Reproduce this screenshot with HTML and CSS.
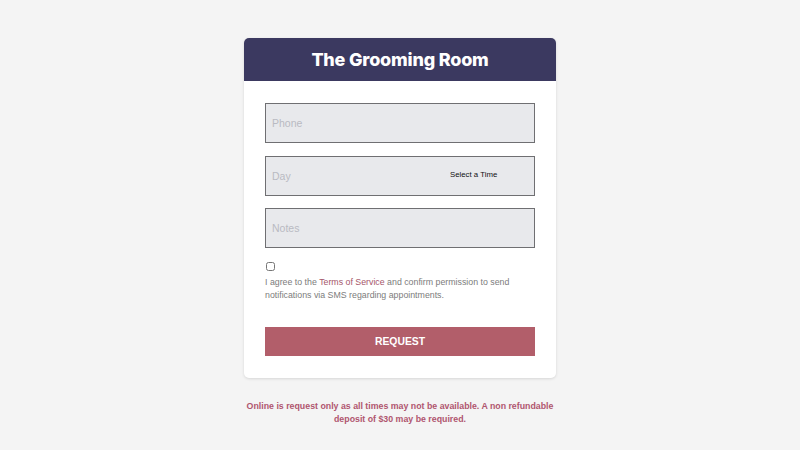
FILE: index.html
```html
<!DOCTYPE html>
<html lang="en">
<head>
    <meta charset="UTF-8">
    <meta name="viewport" content="width=device-width, initial-scale=1.0">
    <title>The Grooming Room</title>
    <link rel="stylesheet" href="styles.css">
</head>
<body>
    <div class="card">
        <div class="card-header">
            <h1>The Grooming Room</h1>
        </div>
        <form class="card-body">
            <div class="field">
                <input type="text" placeholder="Phone">
            </div>
            <div class="field">
                <input type="text" placeholder="Day">
                <span class="time-select">Select a Time</span>
            </div>
            <div class="field">
                <input type="text" placeholder="Notes">
            </div>
            <div class="consent">
                <input type="checkbox" id="agree">
                <label for="agree">I agree to the <a href="#">Terms of Service</a> and confirm permission to send notifications via SMS regarding appointments.</label>
            </div>
            <button type="button" class="request-btn">REQUEST</button>
        </form>
    </div>

    <p class="notice">Online is request only as all times may not be available. A non refundable deposit of $30 may be required.</p>
</body>
</html>
```

FILE: styles.css
```css
body {
    margin: 0;
    background: #f4f4f4;
    font-family: "Liberation Sans", Arial, sans-serif;
    color: #333;
}
.card {
    width: 312px;
    margin: 38px auto 0;
    background: #fff;
    border-radius: 5px;
    box-shadow: 0 1px 3px rgba(0, 0, 0, 0.12);
    overflow: hidden;
}
.card-header {
    background: #3b3960;
    height: 43px;
    display: flex;
    align-items: center;
    justify-content: center;
}
.card-header h1 {
    margin: 0;
    color: #fff;
    font-family: Inter, "Liberation Sans", sans-serif;
    font-weight: 800;
    font-size: 18px;
    letter-spacing: -0.2px;
}
.card-body {
    padding: 22px 21px 22px;
    display: flex;
    flex-direction: column;
}
.field {
    display: flex;
    align-items: center;
    height: 40px;
    box-sizing: border-box;
    border: 1px solid #6f6f72;
    background: #e8e9ec;
    margin-bottom: 12.5px;
}
.field input {
    flex: 1;
    border: none;
    background: transparent;
    padding: 0 6px;
    font-family: inherit;
    font-size: 10.5px;
    outline: none;
    min-width: 0;
}
.field input::placeholder {
    color: #b9bac2;
}
.time-select {
    width: 84px;
    font-size: 7.8px;
    color: #111;
    padding-bottom: 3px;
}
.consent {
    font-size: 8.8px;
    line-height: 13px;
    color: #7c7c7c;
}
.consent input {
    display: block;
    margin: 1.5px 0 4.5px 1px;
    width: 9px;
    height: 9px;
}
.consent a {
    color: #a5566a;
    text-decoration: none;
}
.request-btn {
    margin-top: 25px;
    height: 29px;
    border: none;
    background: #b25e6a;
    color: #fff;
    font-family: inherit;
    font-weight: bold;
    font-size: 10.4px;
    cursor: pointer;
}
.notice {
    width: 312px;
    margin: 22px auto 0;
    text-align: center;
    font-size: 8.8px;
    line-height: 13px;
    font-weight: bold;
    color: #b0566f;
}
```
